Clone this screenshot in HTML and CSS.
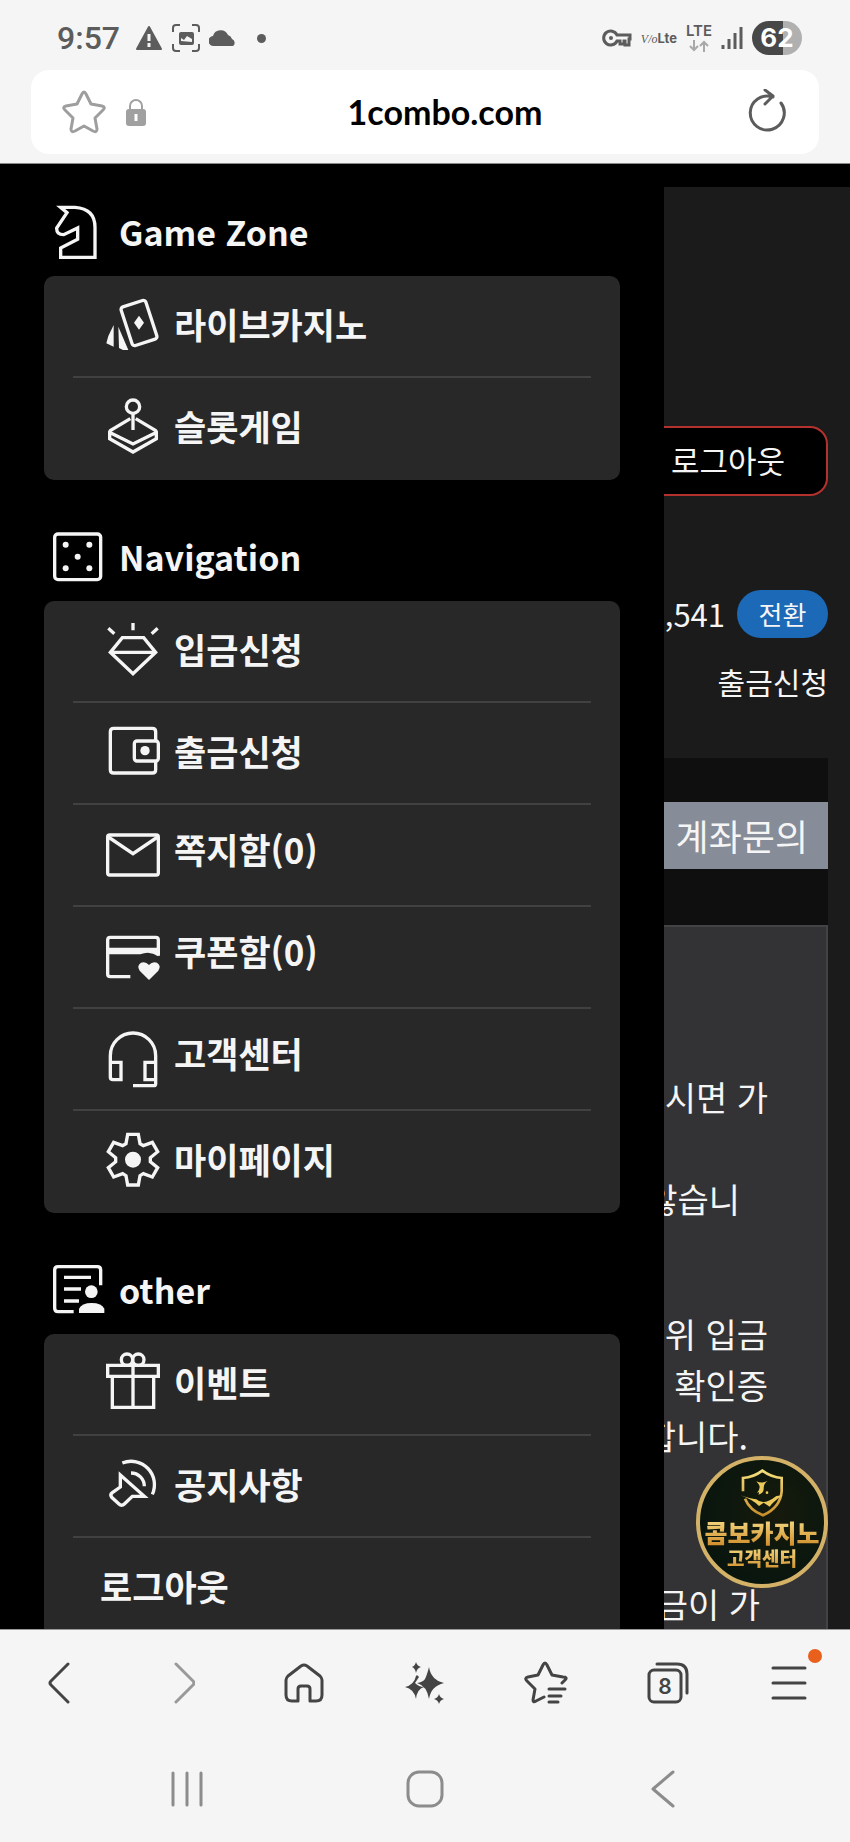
FILE: index.html
```
<!DOCTYPE html>
<html lang="ko">
<head>
    <meta charset="UTF-8">
    <meta name="viewport" content="width=device-width, initial-scale=1.0">
    <title>1combo.com</title>
    <link rel="stylesheet" href="styles.css">
</head>
<body>
    <header class="browser-top">
        <div class="status-bar">
            <div class="status-left">
                <span class="clock">9:57</span>
                <svg width="28" height="26" viewBox="0 0 28 26"><path d="M14 2L26 24H2Z" fill="#5c5c5c" stroke="#5c5c5c" stroke-width="2" stroke-linejoin="round"/><path d="M14 9v7M14 18v4" stroke="#f5f5f5" stroke-width="3"/></svg>
                <svg width="28" height="28" viewBox="0 0 28 28"><path d="M1 8V4q0-3 3-3h4M20 1h4q3 0 3 3v4M27 20v4q0 3-3 3h-4M8 27H4q-3 0-3-3v-4" fill="none" stroke="#5c5c5c" stroke-width="2"/><rect x="7" y="8" width="15" height="13" rx="2" fill="#5c5c5c"/><path d="M9 17v-3l3 2 3-4 5 3v3z" fill="#f5f5f5"/></svg>
                <svg width="28" height="18" viewBox="0 0 28 18"><path d="M5 17a5 5 0 0 1-1-10A8 8 0 0 1 19 6a6 6 0 0 1 4 4 4 4 0 0 1 1 7z" fill="#5c5c5c"/></svg>
                <span class="more-dot"></span>
            </div>
            <div class="status-right">
                <svg width="30" height="18" viewBox="0 0 30 18"><path d="M15 6A7 7 0 1 0 15 12H18V15H22V12H23V16H27V10H28V6Z" fill="none" stroke="#5c5c5c" stroke-width="3"/><circle cx="9" cy="9" r="2" fill="#5c5c5c"/></svg>
                <span class="volte"><i>V/o</i><b>Lte</b></span>
                <span class="lte">LTE
                    <svg width="20" height="12" viewBox="0 0 20 12"><path d="M5 0v10M1 6l4 4 4-4M15 12V2M11 6l4-4 4 4" fill="none" stroke="#a8a8a8" stroke-width="2"/></svg>
                </span>
                <svg width="22" height="24" viewBox="0 0 22 24"><path d="M2 19v4M8 13v10M14 7v16M20 1v22" stroke="#5c5c5c" stroke-width="3"/></svg>
                <span class="battery">62</span>
            </div>
        </div>
        <div class="address-bar">
            <button class="icon-button" aria-label="Bookmark">
                <svg width="44" height="44" viewBox="0 0 44 44"><path d="M20 4Q22 0 24 4L29 14L40 16Q44 17 41 20L33 28L35 39Q35 43 31 41L22 36L13 41Q9 43 9 39L11 28L3 20Q0 17 4 16L15 14Z" fill="none" stroke="#9e9e9e" stroke-width="3" stroke-linejoin="round"/></svg>
            </button>
            <svg width="20" height="28" viewBox="0 0 20 28"><path d="M4 12V8a6 6 0 0 1 12 0v4" fill="none" stroke="#a0a0a0" stroke-width="2"/><rect y="11" width="20" height="17" rx="3" fill="#a0a0a0"/><path d="M10 16v7" stroke="#fff" stroke-width="3"/></svg>
            <span class="url">1combo.com</span>
            <button class="icon-button" aria-label="Reload">
                <svg width="44" height="46" viewBox="0 0 44 46"><path d="M37 14A17 17 0 1 1 29 8M21 1l8 6-8 8" fill="none" stroke="#5c5c5c" stroke-width="3" stroke-linecap="round" stroke-linejoin="round"/></svg>
            </button>
        </div>
    </header>

    <main class="site">
        <nav class="drawer">
            <section class="menu-group">
                <h2 class="menu-title">
                    <svg class="title-icon" viewBox="0 0 156 156"><path d="M29 4H72Q132 8 132 64V154H29V126L80 100V66L38 86Q16 86 17 66L48 20Z"/></svg>
                    Game Zone
                </h2>
                <ul class="menu-list">
                    <li><a class="menu-link" href="#">
                        <svg class="menu-icon" viewBox="0 0 168 168"><rect x="63" y="14" width="78" height="122" rx="8" transform="rotate(-18 102 75)"/><path class="solid" d="M102 53l15 21-15 21-15-21zM26 81v65L4 136l6-22zM40 86l30 70H54l-12-6z"/></svg>
                        <span>라이브카지노</span></a></li>
                    <li><a class="menu-link" href="#">
                        <svg class="menu-icon" viewBox="0 0 168 168"><circle cx="84" cy="20" r="20"/><path d="M84 40V90M76 56L16 92Q12 96 16 98L84 132L152 98Q156 96 152 92L92 56M14 94V116L84 156L154 116V94"/></svg>
                        <span>슬롯게임</span></a></li>
                </ul>
            </section>

            <section class="menu-group">
                <h2 class="menu-title">
                    <svg class="title-icon" viewBox="0 0 156 156"><rect x="11" y="9" width="138" height="137" rx="10"/><g class="solid"><circle cx="44" cy="41" r="9"/><circle cx="115" cy="41" r="9"/><circle cx="80" cy="77" r="9"/><circle cx="44" cy="112" r="9"/><circle cx="115" cy="112" r="9"/></g></svg>
                    Navigation
                </h2>
                <ul class="menu-list">
                    <li><a class="menu-link" href="#">
                        <svg class="menu-icon" viewBox="0 0 168 168"><path d="M52 44H116L152 88L84 152L16 88ZM16 88H152M84 0V22M10 16L28 32M158 16L140 32"/></svg>
                        <span>입금신청</span></a></li>
                    <li><a class="menu-link" href="#">
                        <svg class="menu-icon" viewBox="0 0 168 168"><path d="M152 48V20Q152 10 142 10H26Q16 10 16 20V134Q16 144 26 144H142Q152 144 152 134V108"/><rect x="88" y="48" width="72" height="60" rx="8"/><circle class="solid" cx="120" cy="77" r="14"/></svg>
                        <span>출금신청</span></a></li>
                    <li><a class="menu-link raised" href="#">
                        <svg class="menu-icon" viewBox="0 0 168 168"><rect x="8" y="24" width="152" height="120" rx="6"/><path d="M10 30L84 80L158 30"/></svg>
                        <span>쪽지함(0)</span></a></li>
                    <li><a class="menu-link raised" href="#">
                        <svg class="menu-icon" viewBox="0 0 168 168"><path d="M160 80V33Q160 25 152 25H16Q8 25 8 33V135Q8 143 16 143H76"/><path class="solid" d="M8 56H160V82Q134 64 106 76H8ZM132 153L104 125Q94 110 108 101Q122 96 132 108Q142 96 156 101Q170 110 160 125Z"/></svg>
                        <span>쿠폰함(0)</span></a></li>
                    <li><a class="menu-link raised" href="#">
                        <svg class="menu-icon" viewBox="0 0 168 168"><path d="M16 94V74A68 68 0 0 1 152 74V158Q152 164 146 164H84M16 94H48V146H24Q16 146 16 138ZM152 94H120V146H152"/></svg>
                        <span>고객센터</span></a></li>
                    <li><a class="menu-link" href="#">
                        <svg class="menu-icon" viewBox="0 0 168 168"><g transform="translate(84 80)"><path d="M-21-48L-16-76H16L21-48L31-42L58-52L74-24L52-6V6L74 24L58 52L31 42L21 48L16 76H-16L-21 48L-31 42L-58 52L-74 24L-52 6V-6L-74-24L-58-52L-31-42Z"/><circle class="solid" r="24"/></g></svg>
                        <span>마이페이지</span></a></li>
                </ul>
            </section>

            <section class="menu-group">
                <h2 class="menu-title">
                    <svg class="title-icon" viewBox="0 0 156 156"><path d="M149 64V18Q149 8 139 8H21Q11 8 11 18V133Q11 143 21 143H68M39 40H120M39 75H90M39 111H84"/><path class="solid" d="M84 147V134Q92 117 122 117Q152 117 160 134V147Z"/><circle class="solid" cx="121" cy="83" r="19"/></svg>
                    other
                </h2>
                <ul class="menu-list">
                    <li><a class="menu-link" href="#">
                        <svg class="menu-icon" viewBox="0 0 168 168"><path d="M8 28H160V61H8ZM22 61V154H146V61M84 28V154"/><circle cx="66" cy="11" r="17"/><circle cx="100" cy="11" r="17"/></svg>
                        <span>이벤트</span></a></li>
                    <li><a class="menu-link" href="#">
                        <svg class="menu-icon" viewBox="0 0 168 168"><path d="M46 51L118 115H82L58 138Q50 146 42 138L20 118Q14 110 22 104L46 87ZM52 15A70 70 0 0 1 142 109M78 45A40 40 0 0 1 118 85"/></svg>
                        <span>공지사항</span></a></li>
                    <li><a class="menu-link" href="#"><span>로그아웃</span></a></li>
                </ul>
            </section>
        </nav>

        <div class="page">
            <button class="logout">로그아웃</button>
            <div class="balance">
                <span>7,541</span>
                <button class="convert">전환</button>
            </div>
            <a class="withdraw" href="#">출금신청</a>
            <div class="inquiry-strip">
                <button class="inquiry">계좌문의</button>
            </div>
            <div class="notice">
                <p>시면 가</p>
                <p class="end-28">않습니</p>
                <p class="new-block">위 입금</p>
                <p>확인증</p>
                <p class="end-20">합니다.</p>
                <p class="last-block end-8">금이 가</p>
            </div>
            <a class="support" href="#">
                <svg class="shield" viewBox="0 0 130 150">
                    <defs><linearGradient id="gold" x1="0" y1="0" x2="0" y2="1"><stop offset="0" stop-color="#f3df7c"/><stop offset="1" stop-color="#c98f2c"/></linearGradient></defs>
                    <path d="M8 70V30Q40 28 66 8Q92 28 124 30V70Q120 118 68 142Q28 126 14 92" fill="none" stroke="url(#gold)" stroke-width="8"/>
                    <path d="M0 82Q30 92 48 94Q70 114 108 84L126 82Q96 104 88 116L70 104L56 114Q36 94 0 82ZM48 40Q66 48 82 38Q70 46 70 60Q72 74 54 80Q60 70 50 74Q62 62 56 50Z" fill="#edc95b"/><circle cx="80" cy="74" r="4" fill="#edc95b"/>
                </svg>
                <strong>콤보카지노</strong>
                <span>고객센터</span>
            </a>
        </div>
    </main>

    <footer class="browser-bottom">
        <nav class="toolbar">
            <button aria-label="Back"><svg width="26" height="42" viewBox="0 0 26 42"><path d="M20 2L3 19Q1 21 3 23L20 40"/></svg></button>
            <button class="disabled" aria-label="Forward"><svg width="26" height="42" viewBox="0 0 26 42"><path d="M7 2L24 19Q26 21 24 23L7 40"/></svg></button>
            <button aria-label="Home"><svg width="40" height="42" viewBox="0 0 40 42"><path d="M14 39H8Q2 39 2 33V18Q2 16 4 14L17 4Q20 2 23 4L36 14Q38 16 38 18V33Q38 39 32 39H26V27Q26 24 23 24H17Q14 24 14 27Z"/></svg></button>
            <button aria-label="AI assist"><svg class="filled" width="40" height="44" viewBox="0 0 40 44"><path d="M24 6Q26 19 39 22Q26 25 24 38Q22 25 12 22Q18 21 20 18Q22 14 24 6ZM11 15Q12 13 14 16L10 22Q14 26 19 26Q12 28 11 38Q9 28 0 26Q9 24 11 15ZM11 1Q12 5 16 6Q12 7 11 12Q10 7 7 6Q10 5 11 1ZM34 33Q35 37 39 38Q35 39 34 43Q33 39 29 38Q33 37 34 33Z"/></svg></button>
            <button aria-label="Bookmarks"><svg width="44" height="44" viewBox="0 0 44 44"><path d="M38 22L41 19Q44 16 39 16L28 14L23 4Q21 0 19 4L14 14L4 16Q0 17 3 20L11 28L9 39Q9 42 12 40L20 36M25 28H41M25 35H37M25 41H34"/></svg></button>
            <button aria-label="Tabs"><svg width="42" height="42" viewBox="0 0 42 42"><rect x="2" y="8" width="32" height="32" rx="5"/><path d="M10 2H30Q40 2 40 12V31"/><text x="18" y="32">8</text></svg></button>
            <button class="menu-button" aria-label="Menu"><svg width="36" height="34" viewBox="0 0 36 34"><path d="M2 2H34M2 17H34M2 32H34"/></svg></button>
        </nav>
        <nav class="system-nav">
            <button aria-label="Recents"><svg width="34" height="36" viewBox="0 0 34 36"><path d="M3 2V34M17 2V34M31 2V34"/></svg></button>
            <button aria-label="Home screen"><svg width="38" height="38" viewBox="0 0 38 38"><rect x="2" y="2" width="34" height="34" rx="11"/></svg></button>
            <button aria-label="System back"><svg width="24" height="38" viewBox="0 0 24 38"><path d="M22 2L2 19L22 36"/></svg></button>
        </nav>
    </footer>
</body>
</html>
```
FILE: styles.css
```
* { box-sizing: border-box; }
body { margin: 0; height: 100vh; display: flex; flex-direction: column; background: #000; color: #f5f5f5; font-family: "Noto Sans CJK KR", "Noto Sans", sans-serif; }
button { margin: 0; padding: 0; border: none; background: none; color: inherit; font: inherit; cursor: pointer; }
a { color: inherit; text-decoration: none; }
svg { display: block; flex: none; }

/* browser chrome, top */
.browser-top { height: 164px; flex: none; background: #f5f5f5; border-bottom: 1px solid #888; color: #5c5c5c; }
.status-bar { height: 70px; padding: 6px 48px 0 57px; display: flex; justify-content: space-between; align-items: center; }
.status-left, .status-right { display: flex; align-items: center; gap: 9px; }
.clock { margin-right: 6px; font: 500 32px/1 Roboto, sans-serif; }
.more-dot { width: 9px; height: 9px; margin-left: 11px; border-radius: 50%; background: #5c5c5c; }
.volte { font: 12px/1 "Liberation Serif", serif; }
.volte b { font: bold 13px/1 Inter, sans-serif; }
.lte { display: flex; flex-direction: column; align-items: center; gap: 3px; font: 600 15px/12px Inter, sans-serif; }
.battery { width: 50px; height: 34px; border-radius: 17px; background: linear-gradient(to right, #484848 62%, #b0b0b0 62%); color: #fff; font: bold 26px/34px Inter, sans-serif; text-align: center; }
.address-bar { height: 84px; margin: 0 31px; padding: 0 31px; display: flex; align-items: center; border-radius: 18px; background: #fff; }
.address-bar .icon-button { margin-right: 20px; }
.address-bar .icon-button:last-child { margin-right: 0; }
.url { flex: 1; color: #000; font: bold 34px/1 Lato, sans-serif; text-align: center; }

.site { flex: 1; min-height: 0; display: flex; overflow: hidden; }

/* side menu */
.drawer { width: 78.1%; flex: none; padding: 36px 44px 0; overflow: hidden; background: #000; }
.menu-group { margin-bottom: 45px; }
.menu-title { height: 76px; margin: 0; padding: 0 0 12px 7px; display: flex; align-items: center; gap: 16px; font-size: 34px; font-weight: bold; line-height: 64px; }
.title-icon { width: 52px; height: 52px; }
.title-icon, .menu-icon { overflow: visible; fill: none; stroke: #f5f5f5; stroke-width: 10; }
.solid { fill: #f5f5f5; stroke: none; }
.menu-list { margin: 0; padding: 0 29px; list-style: none; border-radius: 10px; background: #282828; }
.menu-list li { height: 102px; border-bottom: 2px solid #414141; }
.menu-list li:last-child { border-bottom: none; }
.menu-link { height: 100px; padding-left: 27px; display: flex; align-items: center; font-size: 35px; font-weight: bold; line-height: 50px; }
.menu-link span { padding-bottom: 4px; }
.menu-link.raised span { padding-bottom: 12px; }
.menu-icon { width: 56px; height: 56px; margin: 0 13px 0 5px; }

/* page behind the menu */
.page { flex: 1; min-width: 0; margin-top: 23px; padding: 239px 22px 0 0; display: flex; flex-direction: column; align-items: flex-end; overflow: hidden; position: relative; background: #1b1b1c; font-size: 31px; white-space: nowrap; }
.page > * { flex: none; }
.logout { width: 240px; height: 70px; padding: 0 41px 4px 0; border: 2px solid #b4322e; border-radius: 18px; background: #000; text-align: right; }
.balance { margin-top: 94px; display: flex; align-items: center; gap: 12px; line-height: 46px; }
.convert { width: 91px; height: 48px; border-radius: 24px; background: #1c69b8; font-size: 26px; line-height: 46px; }
.withdraw { margin-top: 20px; font-size: 30px; line-height: 46px; }
.inquiry-strip { align-self: stretch; height: 167px; margin-top: 54px; padding: 44px 0 56px; display: flex; background: #0f0f10; }
.inquiry { flex: 1; padding: 0 20px 2px 0; background: #868c98; font-size: 36px; text-align: right; }
.notice { align-self: stretch; height: 900px; padding: 144px 58px 0 0; border-top: 2px solid #434345; border-right: 2px solid #434345; background: #333335; font-size: 34px; line-height: 51px; }
.notice p { margin: 0; display: flex; justify-content: flex-end; }
.notice .end-8 { padding-right: 8px; }
.notice .end-20 { padding-right: 20px; }
.notice .end-28 { padding-top: 51px; padding-right: 28px; }
.notice .new-block { padding-top: 84px; }
.notice .last-block { padding-top: 117px; }

.support { position: absolute; right: 22px; bottom: 41px; width: 132px; height: 132px; padding-top: 8px; border: 4px solid #d3b268; border-radius: 50%; display: flex; flex-direction: column; align-items: center; background: radial-gradient(circle at 60% 40%, #161a0c, #03140f); }
.shield { width: 44px; height: 50px; }
.support strong, .support span { background: linear-gradient(#f5dc86, #d08e2b); background-clip: text; color: transparent; font-weight: 900; }
.support strong { font-size: 25px; line-height: 28px; }
.support span { font-size: 19px; line-height: 24px; }

/* browser chrome, bottom */
.browser-bottom { flex: none; background: #f5f5f5; border-top: 1px solid #999; }
.browser-bottom button { display: flex; align-items: center; justify-content: center; }
.browser-bottom svg { fill: none; stroke: #444; stroke-width: 3; stroke-linecap: round; stroke-linejoin: round; }
.toolbar { height: 106px; display: grid; grid-template-columns: repeat(7, 1fr); }
.browser-bottom .disabled svg { stroke: #999; }
.browser-bottom .filled { fill: #444; stroke: none; }
.toolbar text { fill: #444; stroke: none; font: 600 21px Inter, sans-serif; text-anchor: middle; }
.menu-button { position: relative; }
.menu-button::after { content: ""; position: absolute; top: 19px; right: 28px; width: 14px; height: 14px; border-radius: 50%; background: #e8601c; }
.system-nav { height: 106px; padding: 0 68px; display: grid; grid-template-columns: repeat(3, 1fr); }
.system-nav svg { stroke: #8c8c8c; }
```
